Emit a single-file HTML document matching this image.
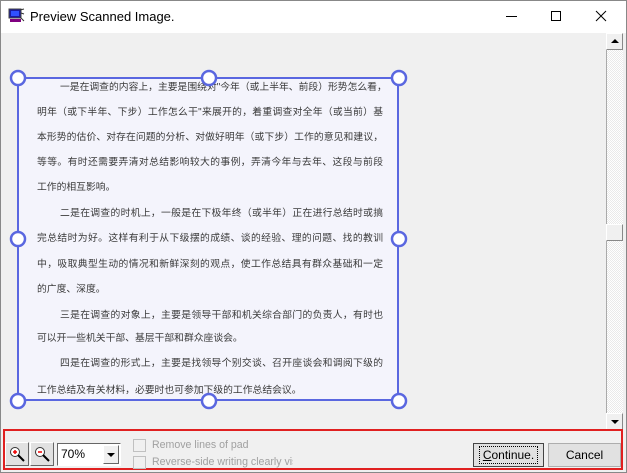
<!DOCTYPE html>
<html><head><meta charset="utf-8"><style>
*{margin:0;padding:0;box-sizing:border-box}
body{width:627px;height:473px;overflow:hidden;background:#f0f0f0;font-family:"Liberation Sans","Noto Sans CJK SC",sans-serif;position:relative}
.a{position:absolute}
.ln{position:absolute;font-size:9.8px;color:#3a3a3a;white-space:nowrap;font-family:"Liberation Sans","Noto Sans CJK SC",sans-serif;line-height:14px}
.j{text-align:justify;text-align-last:justify;width:346px}
.btn{position:absolute;background:#e1e1e1;border:1px solid #adadad;font-size:12px;text-align:center;line-height:22px;color:#000}
.cb{position:absolute;width:13px;height:13px;border:1px solid #c0c0c0;background:#f0f0f0}
.ct{position:absolute;font-size:10.6px;color:#a0a0a0}
</style></head><body>
<div class="a" style="left:0;top:0;width:627px;height:473px;border:1px solid #888"></div>
<div class="a" style="left:1px;top:1px;width:625px;height:32px;background:#fff"></div>
<svg class="a" style="left:8px;top:8px" width="18" height="16"><rect x="1" y="1" width="12" height="9" fill="#1a1aa0" stroke="#444"/><rect x="3" y="3" width="8" height="5" fill="#3050ff"/><rect x="2" y="11" width="11" height="3" fill="#800080"/><path d="M12 2l4 -1M13 5l3 1M12 9l4 4" stroke="#333"/></svg>
<div class="a" style="left:30px;top:9px;font-size:13px;color:#000">Preview Scanned Image.</div>
<div class="a" style="left:506px;top:16px;width:11px;height:1px;background:#000"></div>
<div class="a" style="left:551px;top:11px;width:10px;height:10px;border:1px solid #000"></div>
<svg class="a" style="left:595px;top:10px" width="12" height="12"><path d="M1 1L11 11M11 1L1 11" stroke="#000" stroke-width="1"/></svg>
<div class="a" style="left:606px;top:33px;width:17px;height:397px;background:repeating-conic-gradient(#fff 0 25%,#eaeaea 0 50%) 0 0/2px 2px;border-left:1px solid #aaa"></div>
<div class="a" style="left:606px;top:33px;width:17px;height:17px;background:#f0f0f0;border:1px solid;border-color:#fff #888 #888 #fff"></div>
<svg class="a" style="left:611px;top:39px" width="8" height="5"><path d="M0 4L4 0L8 4Z" fill="#000"/></svg>
<div class="a" style="left:606px;top:224px;width:17px;height:17px;background:#f0f0f0;border:1px solid;border-color:#fff #888 #888 #fff"></div>
<div class="a" style="left:606px;top:413px;width:17px;height:17px;background:#f0f0f0;border:1px solid;border-color:#fff #888 #888 #fff"></div>
<svg class="a" style="left:611px;top:420px" width="8" height="5"><path d="M0 0L8 0L4 4Z" fill="#000"/></svg>
<div class="a" style="left:17px;top:77px;width:382px;height:324px;background:#f4f4fc;border:2px solid #5a67e0"></div>
<div class="ln j" style="left:60px;top:81px;width:323px">一是在调查的内容上，主要是围绕对"今年（或上半年、前段）形势怎么看，</div>
<div class="ln j" style="left:37px;top:106px">明年（或下半年、下步）工作怎么干"来展开的，着重调查对全年（或当前）基</div>
<div class="ln j" style="left:37px;top:131px">本形势的估价、对存在问题的分析、对做好明年（或下步）工作的意见和建议，</div>
<div class="ln j" style="left:37px;top:156px">等等。有时还需要弄清对总结影响较大的事例，弄清今年与去年、这段与前段</div>
<div class="ln" style="left:37px;top:181px">工作的相互影响。</div>
<div class="ln j" style="left:60px;top:207px;width:323px">二是在调查的时机上，一般是在下极年终（或半年）正在进行总结时或搞</div>
<div class="ln j" style="left:37px;top:232px">完总结时为好。这样有利于从下级摆的成绩、谈的经验、理的问题、找的教训</div>
<div class="ln j" style="left:37px;top:258px">中，吸取典型生动的情况和新鲜深刻的观点，使工作总结具有群众基础和一定</div>
<div class="ln" style="left:37px;top:283px">的广度、深度。</div>
<div class="ln j" style="left:60px;top:309px;width:323px">三是在调查的对象上，主要是领导干部和机关综合部门的负责人，有时也</div>
<div class="ln" style="left:37px;top:332px">可以开一些机关干部、基层干部和群众座谈会。</div>
<div class="ln j" style="left:60px;top:357px;width:323px">四是在调查的形式上，主要是找领导个别交谈、召开座谈会和调阅下级的</div>
<div class="ln" style="left:37px;top:384px">工作总结及有关材料，必要时也可参加下级的工作总结会议。</div>
<svg class="a" style="left:0;top:60px" width="420" height="360">
<g fill="#fff" stroke="#5a67e0" stroke-width="2.5">
<circle cx="18" cy="18" r="7"/><circle cx="209" cy="18" r="7"/><circle cx="399" cy="18" r="7"/>
<circle cx="18" cy="179" r="7"/><circle cx="399" cy="179" r="7"/>
<circle cx="18" cy="341" r="7"/><circle cx="209" cy="341" r="7"/><circle cx="399" cy="341" r="7"/>
</g></svg>
<div class="a" style="left:3px;top:429px;width:620px;height:41px;border:2px solid #e02020"></div>
<div class="btn" style="left:5px;top:442px;width:24px;height:24px;border-color:#fff #666 #666 #fff"></div>
<div class="btn" style="left:30px;top:442px;width:24px;height:24px;border-color:#fff #666 #666 #fff"></div>
<svg class="a" style="left:9px;top:446px" width="18" height="18"><circle cx="6" cy="6" r="4.5" fill="#fff" stroke="#333"/><path d="M4 6h4M6 4v4" stroke="#e00" stroke-width="1.5"/><path d="M9 9l6 6" stroke="#000" stroke-width="2"/></svg>
<svg class="a" style="left:34px;top:446px" width="18" height="18"><circle cx="6" cy="6" r="4.5" fill="#fff" stroke="#333"/><path d="M4 6h4" stroke="#e00" stroke-width="1.5"/><path d="M9 9l6 6" stroke="#000" stroke-width="2"/></svg>
<div class="a" style="left:57px;top:443px;width:64px;height:23px;background:#fff;border:1px solid;border-color:#666 #fff #fff #666"></div>
<div class="a" style="left:61px;top:447px;font-size:12px">70%</div>
<div class="a" style="left:103px;top:445px;width:16px;height:19px;background:#f0f0f0;border:1px solid;border-color:#fff #666 #666 #fff"></div>
<svg class="a" style="left:107px;top:453px" width="8" height="5"><path d="M0 0L8 0L4 4Z" fill="#000"/></svg>
<div class="cb" style="left:133px;top:439px"></div>
<div class="ct" style="left:152px;top:439px">Remove lines of pad</div>
<div class="cb" style="left:133px;top:456px"></div>
<div class="ct" style="left:152px;top:456px;width:141px;overflow:hidden;white-space:nowrap">Reverse-side writing clearly visible</div>
<div class="btn" style="left:473px;top:443px;width:71px;height:24px;border:1px solid #444"><span style="border:1px dotted #000;padding:0 3px;display:inline-block;line-height:16px;margin-top:2px"><u>C</u>ontinue.</span></div>
<div class="btn" style="left:548px;top:443px;width:73px;height:24px">Cancel</div>
</body></html>
